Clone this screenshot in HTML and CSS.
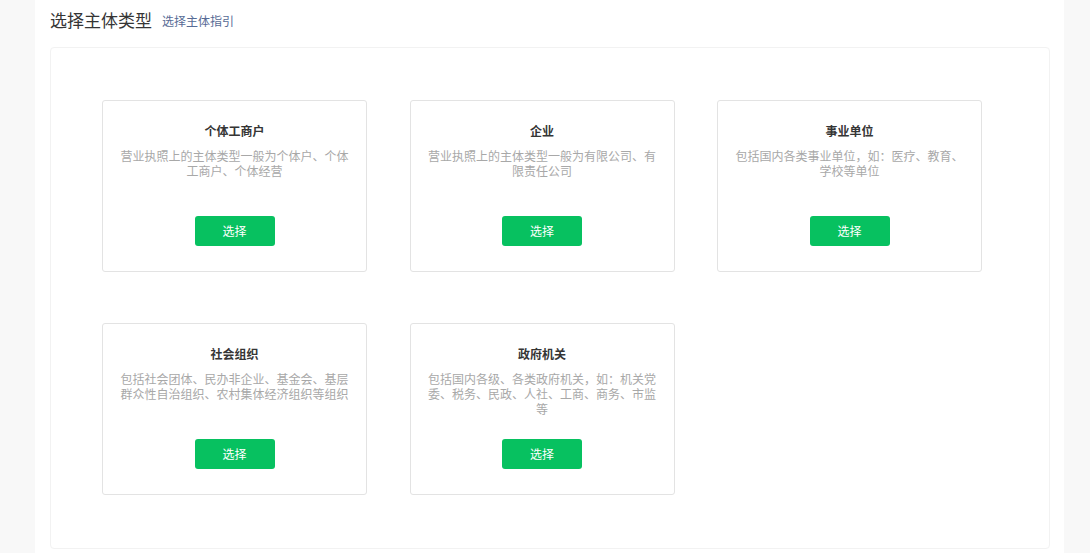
FILE: index.html
```html
<!DOCTYPE html>
<html lang="zh-CN">
<head>
  <meta charset="utf-8">
  <title>选择主体类型</title>
  <link rel="stylesheet" href="styles.css">
</head>
<body>
  <div class="main">
    <div class="page-hd">
      <h2 class="page-title">选择主体类型</h2>
      <a class="page-link" href="#">选择主体指引</a>
    </div>
    <div class="panel">
      <div class="type-list">
        <div class="type-card">
          <h3 class="type-name">个体工商户</h3>
          <p class="type-desc">营业执照上的主体类型一般为个体户、个体工商户、个体经营</p>
          <a class="btn" href="#">选择</a>
        </div>
        <div class="type-card">
          <h3 class="type-name">企业</h3>
          <p class="type-desc">营业执照上的主体类型一般为有限公司、有限责任公司</p>
          <a class="btn" href="#">选择</a>
        </div>
        <div class="type-card">
          <h3 class="type-name">事业单位</h3>
          <p class="type-desc">包括国内各类事业单位，如：医疗、教育、学校等单位</p>
          <a class="btn" href="#">选择</a>
        </div>
        <div class="type-card">
          <h3 class="type-name">社会组织</h3>
          <p class="type-desc">包括社会团体、民办非企业、基金会、基层群众性自治组织、农村集体经济组织等组织</p>
          <a class="btn" href="#">选择</a>
        </div>
        <div class="type-card">
          <h3 class="type-name">政府机关</h3>
          <p class="type-desc">包括国内各级、各类政府机关，如：机关党委、税务、民政、人社、工商、商务、市监等</p>
          <a class="btn" href="#">选择</a>
        </div>
      </div>
    </div>
  </div>
</body>
</html>
```

FILE: styles.css
```css
html,
body {
  height: 100%;
}

body {
  margin: 0;
  background: #F8F8F8;
  font-family: "Noto Sans CJK SC", "Noto Sans", sans-serif;
  font-size: 12px;
  color: #353535;
}

.main {
  width: 1029px;
  min-height: 100%;
  margin-left: 35px;
  padding: 0 14px 0 15px;
  box-sizing: border-box;
  background: #FFFFFF;
}

.page-hd {
  display: flex;
  align-items: center;
  gap: 10px;
  height: 47px;
  padding-bottom: 8px;
  box-sizing: border-box;
}

.page-title {
  margin: 0;
  font-size: 17px;
  font-weight: normal;
  color: #353535;
}

.page-link {
  font-size: 12px;
  color: #576B95;
  text-decoration: none;
  margin-top: 2px;
}

.panel {
  border: 1px solid #F2F2F2;
  border-radius: 4px;
  padding: 52px 51px;
  height: 502px;
  box-sizing: border-box;
}

.type-list {
  display: grid;
  grid-template-columns: repeat(3, 265px);
  column-gap: 42.5px;
  row-gap: 51px;
}

.type-card {
  height: 172px;
  box-sizing: border-box;
  border: 1px solid #E3E3E3;
  border-radius: 3px;
  padding: 20px 16px 0;
  text-align: center;
}

.type-name {
  margin: 0;
  font-size: 12px;
  line-height: 20px;
  font-weight: bold;
  color: #353535;
}

.type-desc {
  margin: 7px 0 0;
  height: 68px;
  font-size: 12px;
  line-height: 15px;
  color: #A8A8A8;
}

.btn {
  display: inline-block;
  width: 80px;
  height: 30px;
  line-height: 30px;
  border-radius: 3px;
  background: #07C160;
  color: #FFFFFF;
  font-size: 12px;
  text-decoration: none;
}
```
